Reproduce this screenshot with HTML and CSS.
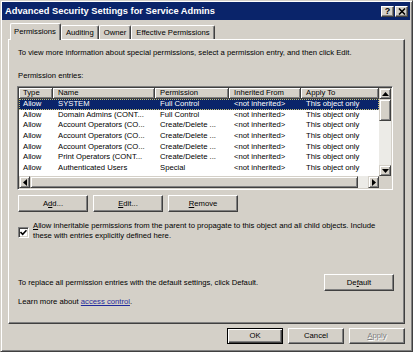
FILE: index.html
```html
<!DOCTYPE html>
<html lang="en">
<head>
    <meta charset="UTF-8">
    <title>Advanced Security Settings for Service Admins</title>
    <link rel="stylesheet" href="styles.css">
</head>
<body>
    <div class="window">
        <div class="titlebar">
            <span class="title">Advanced Security Settings for Service Admins</span>
            <div class="caption-btns">
                <span class="cbtn">?</span>
                <span class="cbtn">
                    <svg width="8" height="7" viewBox="0 0 8 7"><path d="M1 0.5 L7 6.5 M7 0.5 L1 6.5" stroke="#000" stroke-width="1.6"/></svg>
                </span>
            </div>
        </div>

        <div class="content">
            <div class="tabs">
                <div class="tab active">Permissions</div>
                <div class="tab">Auditing</div>
                <div class="tab">Owner</div>
                <div class="tab">Effective Permissions</div>
            </div>

            <div class="panel">
                <p class="intro">To view more information about special permissions, select a permission entry, and then click Edit.</p>
                <div class="label">Permission entries:</div>

                <div class="listview">
                    <div class="lv-main">
                        <div class="lv-row lv-head">
                            <div class="hcell">Type</div>
                            <div class="hcell">Name</div>
                            <div class="hcell">Permission</div>
                            <div class="hcell">Inherited From</div>
                            <div class="hcell">Apply To</div>
                        </div>
                        <div class="lv-row selected">
                            <div>Allow</div><div>SYSTEM</div><div>Full Control</div><div>&lt;not inherited&gt;</div><div>This object only</div>
                        </div>
                        <div class="lv-row">
                            <div>Allow</div><div>Domain Admins (CONT...</div><div>Full Control</div><div>&lt;not inherited&gt;</div><div>This object only</div>
                        </div>
                        <div class="lv-row">
                            <div>Allow</div><div>Account Operators (CO...</div><div>Create/Delete ...</div><div>&lt;not inherited&gt;</div><div>This object only</div>
                        </div>
                        <div class="lv-row">
                            <div>Allow</div><div>Account Operators (CO...</div><div>Create/Delete ...</div><div>&lt;not inherited&gt;</div><div>This object only</div>
                        </div>
                        <div class="lv-row">
                            <div>Allow</div><div>Account Operators (CO...</div><div>Create/Delete ...</div><div>&lt;not inherited&gt;</div><div>This object only</div>
                        </div>
                        <div class="lv-row">
                            <div>Allow</div><div>Print Operators (CONT...</div><div>Create/Delete ...</div><div>&lt;not inherited&gt;</div><div>This object only</div>
                        </div>
                        <div class="lv-row">
                            <div>Allow</div><div>Authenticated Users</div><div>Special</div><div>&lt;not inherited&gt;</div><div>This object only</div>
                        </div>
                        <div class="lv-row">
                            <div>Allow</div><div>ENTERPRISE DOMAIN ...</div><div>Special</div><div>&lt;not inherited&gt;</div><div>This object only</div>
                        </div>
                    </div>

                    <div class="vscroll">
                        <span class="sbtn"><svg width="7" height="4" viewBox="0 0 7 4"><polygon points="3.5,0 7,4 0,4" fill="#000"/></svg></span>
                        <span class="vthumb"></span>
                        <span class="track"></span>
                        <span class="sbtn"><svg width="7" height="4" viewBox="0 0 7 4"><polygon points="0,0 7,0 3.5,4" fill="#000"/></svg></span>
                    </div>

                    <div class="hscroll">
                        <span class="sbtn"><svg width="4" height="7" viewBox="0 0 4 7"><polygon points="0,3.5 4,0 4,7" fill="#000"/></svg></span>
                        <span class="hthumb"></span>
                        <span class="track"></span>
                        <span class="sbtn"><svg width="4" height="7" viewBox="0 0 4 7"><polygon points="0,0 4,3.5 0,7" fill="#000"/></svg></span>
                    </div>
                    <div class="corner"></div>
                </div>

                <div class="btn-row">
                    <button class="btn">A<u>d</u>d...</button>
                    <button class="btn"><u>E</u>dit...</button>
                    <button class="btn"><u>R</u>emove</button>
                </div>

                <div class="check-row">
                    <span class="checkbox">
                        <svg width="7" height="7" viewBox="0 0 7 7"><path d="M0.5 3 L2.7 5.3 L6.5 1.2" fill="none" stroke="#000" stroke-width="1.6"/></svg>
                    </span>
                    <span class="check-text"><u>A</u>llow inheritable permissions from the parent to propagate to this object and all child objects. Include these with entries explicitly defined here.</span>
                </div>

                <div class="default-row">
                    <span>To replace all permission entries with the default settings, click Default.</span>
                    <button class="btn">De<u>f</u>ault</button>
                </div>

                <div class="learn">Learn more about <a href="#">access control</a>.</div>
            </div>

            <div class="footer">
                <button class="btn small default">OK</button>
                <button class="btn small">Cancel</button>
                <button class="btn small disabled"><u>A</u>pply</button>
            </div>
        </div>
    </div>
</body>
</html>
```

FILE: styles.css
```css
* {
    box-sizing: border-box;
}

body {
    margin: 0;
    background: #d4d0c8;
    font-family: "Liberation Sans", Arial, sans-serif;
    font-size: 7.7px;
    color: #000;
}

.window {
    width: 413px;
    height: 352px;
    border: 1px solid;
    border-color: #d4d0c8 #404040 #404040 #d4d0c8;
    box-shadow: inset 1px 1px #fff, inset -1px -1px #808080;
    padding: 1px 2px 2px 1px;
    background: #d4d0c8;
}

.titlebar {
    height: 18px;
    background: #0a246a;
    display: flex;
    align-items: center;
    justify-content: space-between;
    padding: 0 2px 0 3px;
}

.title {
    color: #fff;
    font-weight: bold;
    font-size: 9.3px;
}

.caption-btns {
    display: flex;
    gap: 1px;
}

.cbtn {
    width: 13px;
    height: 11px;
    background: #d4d0c8;
    border: 1px solid;
    border-color: #fff #404040 #404040 #fff;
    box-shadow: inset -1px -1px #808080;
    display: flex;
    align-items: center;
    justify-content: center;
    font-weight: bold;
    font-size: 9px;
    line-height: 1;
}

.content {
    padding: 3px 5px 0 6px;
}

/* tabs */
.tabs {
    display: flex;
    align-items: flex-end;
    height: 16px;
    padding-left: 2px;
}

.tab {
    height: 14px;
    line-height: 13px;
    padding: 0 4px;
    border-top: 1px solid #fff;
    border-left: 1px solid #fff;
    border-right: 1px solid #404040;
    box-shadow: inset -1px 0 #808080;
    border-radius: 2px 2px 0 0;
    background: #d4d0c8;
}

.tab.active {
    height: 17px;
    line-height: 15px;
    margin-bottom: -1px;
    padding: 0 4px 0 3px;
    position: relative;
    z-index: 1;
}

/* main panel */
.panel {
    height: 285px;
    border: 1px solid;
    border-color: #fff #404040 #404040 #fff;
    box-shadow: inset -1px -1px #808080;
    padding: 8px 10px 0 9px;
    line-height: 10px;
}

.intro {
    margin: 0;
}

.label {
    margin-top: 13px;
}

/* list view */
.listview {
    margin: 5px 0 0 -1px;
    width: 376px;
    height: 104px;
    border: 1px solid;
    border-color: #808080 #fff #fff #808080;
    box-shadow: inset 1px 1px #404040, inset -1px -1px #d4d0c8;
    padding: 1px;
    background: #fff;
    display: grid;
    grid-template-columns: 1fr 12px;
    grid-template-rows: 1fr 12px;
}

.lv-main {
    overflow: hidden;
}

.lv-row {
    display: grid;
    grid-template-columns: 34px 102px 74px 72px 1fr;
    height: 10.7px;
    line-height: 10.7px;
    white-space: nowrap;
}

.lv-row > div {
    padding-left: 5px;
    overflow: hidden;
}

.lv-row > div:first-child {
    padding-left: 4px;
}

.lv-row.lv-head {
    height: 11px;
    line-height: 10px;
}

.hcell {
    background: #d4d0c8;
    border-right: 1px solid #404040;
    border-bottom: 1px solid #404040;
    box-shadow: inset 1px 1px #fff, inset -1px -1px #808080;
}

.lv-row.selected {
    background: #0a246a;
    color: #fff;
    outline: 1px dotted #c8c070;
    outline-offset: -1px;
}

/* scrollbars */
.vscroll,
.hscroll {
    display: flex;
    background: #ecebe7;
}

.vscroll {
    flex-direction: column;
}

.sbtn,
.vthumb,
.hthumb {
    background: #d4d0c8;
    border: 1px solid;
    border-color: #d4d0c8 #404040 #404040 #d4d0c8;
    box-shadow: inset 1px 1px #fff, inset -1px -1px #808080;
}

.sbtn {
    width: 12px;
    height: 12px;
    flex: none;
    display: flex;
    align-items: center;
    justify-content: center;
}

.vscroll .sbtn {
    height: 11px;
}

.hscroll .sbtn {
    width: 11px;
}

.vthumb {
    height: 22px;
}

.hthumb {
    width: 328px;
}

.track {
    flex: 1;
}

.corner {
    background: #d4d0c8;
}

/* buttons */
.btn {
    font: inherit;
    color: #000;
    background: #d4d0c8;
    border: 1px solid;
    border-color: #fff #404040 #404040 #fff;
    box-shadow: inset -1px -1px #808080;
    width: 70px;
    height: 17px;
    padding: 0;
    line-height: 14px;
}

.btn-row {
    display: flex;
    gap: 5px;
    margin-top: 5px;
}

.check-row {
    display: flex;
    gap: 4px;
    margin-top: 9px;
    padding-right: 4px;
}

.checkbox {
    flex: none;
    width: 11px;
    height: 11px;
    margin-top: 6px;
    background: #fff;
    border: 1px solid;
    border-color: #808080 #fff #fff #808080;
    box-shadow: inset 1px 1px #404040, inset -1px -1px #d4d0c8;
    display: flex;
    align-items: center;
    justify-content: center;
}

.default-row {
    display: flex;
    align-items: center;
    justify-content: space-between;
    margin-top: 33px;
}

.learn {
    margin-top: 6px;
}

.learn a {
    color: #1f2a9c;
}

/* dialog buttons */
.footer {
    display: flex;
    justify-content: flex-end;
    gap: 5px;
    margin-top: 4px;
}

.btn.small {
    width: 56px;
    height: 16px;
}

.btn.default {
    border: 1px solid #000;
    box-shadow: inset 1px 1px #fff, inset -1px -1px #404040, inset -2px -2px #808080;
}

.btn.disabled {
    color: #808080;
    text-shadow: 1px 1px #fff;
}
```
